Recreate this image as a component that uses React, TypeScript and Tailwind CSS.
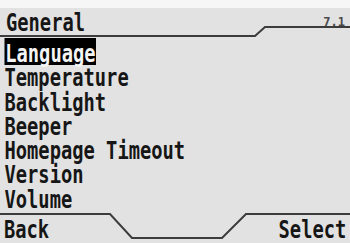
import React from 'react'

const items = ['Language', 'Temperature', 'Backlight', 'Beeper', 'Homepage Timeout', 'Version', 'Volume']

const App = () => {
    return (
        <div className="w-[350px] h-[243px] flex flex-col bg-[#e2e2e2] text-[#161616] font-['DejaVu_Sans_Mono',monospace] font-bold overflow-hidden">
            {/* Header */}
            <div className="relative h-[42px] flex flex-col">
                <div className="h-[8px] bg-[#f6f6f6]"></div>
                <div className="flex justify-between items-start px-[6px] pt-[3px]">
                    <span className="text-[25px] leading-6 scale-x-[0.75] origin-left whitespace-nowrap">General</span>
                    <span className="text-[12px] leading-3 mt-[5px] mr-[-1px] text-[#4a4a4a] whitespace-nowrap">7.1</span>
                </div>
                <svg className="absolute inset-0" width="350" height="42" viewBox="0 0 350 42">
                    <polyline points="0,36 255,36 265,27 350,27" fill="none" stroke="#3c3c3c" strokeWidth="2" />
                </svg>
            </div>

            {/* Menu */}
            <div className="flex flex-col px-[6px] scale-x-[0.75] origin-left">
                {items.map((item, i) => (
                    <div key={item} className="h-[24.3px] text-[25px] leading-6 whitespace-nowrap">
                        {i === 0 ? (
                            <span className="block w-fit bg-black text-[#f4f4f4] -mt-[4px] pt-[4px] h-[27px] pl-[1px] pr-[1px]">{item}</span>
                        ) : (
                            item
                        )}
                    </div>
                ))}
            </div>

            {/* Footer */}
            <div className="relative flex-1 flex justify-between items-start px-[4px] pt-[6px]">
                <svg className="absolute left-0 top-0" width="350" height="31" viewBox="0 0 350 31">
                    <polyline points="0,2 110,2 132,26 222,26 246,2 350,2" fill="none" stroke="#3c3c3c" strokeWidth="2" />
                </svg>
                <span className="text-[25px] leading-6 scale-x-[0.75] origin-left whitespace-nowrap">Back</span>
                <span className="text-[25px] leading-6 scale-x-[0.75] origin-right whitespace-nowrap">Select</span>
            </div>
        </div>
    )
}

export default App
